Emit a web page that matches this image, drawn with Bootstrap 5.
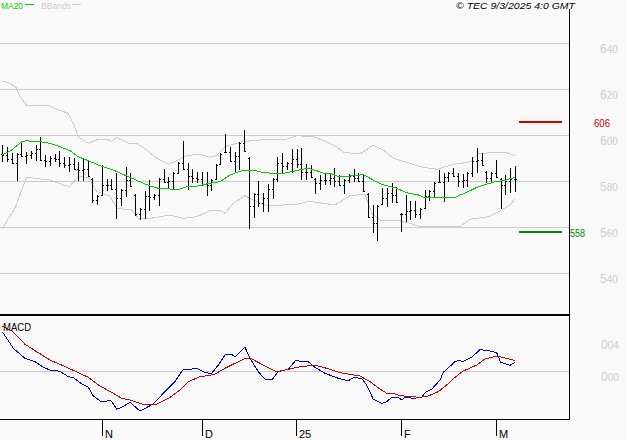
<!DOCTYPE html>
<html lang="en">
<head>
<meta charset="utf-8">
<title>Chart</title>
<link href="https://cdn.jsdelivr.net/npm/bootstrap@5.3.0/dist/css/bootstrap.min.css" rel="stylesheet">
<style>
html,body{background:#f9f9f9;overflow:hidden}
.chart-frame{width:627px;height:440px}
.chart-canvas{width:627px;height:440px;font-family:"Liberation Sans",Arial,sans-serif}
.chart-canvas line,.chart-canvas polyline,.chart-canvas rect,.chart-canvas path{shape-rendering:crispEdges}
.chart-canvas polyline{fill:none;stroke-width:1}
.grid-line{stroke:#ccc;stroke-width:1}
.axis-line{stroke:#000;stroke-width:1}
.band-line{stroke:#ccc}
.ma-line{stroke:#00cc00}
.macd-line{stroke:#0000cc}
.signal-line{stroke:#cc0000}
.bars-path{stroke:#000;stroke-width:1;fill:none}
.txt{font-size:11px}
.txt-top{font-size:9.5px}
.txt-grey{fill:#ccc}
.txt-green{fill:#00cc00}
.txt-dark-green{fill:#008800;font-size:11px}
.txt-red{fill:#cc0000;font-size:11px}
.txt-black{fill:#000}
.txt-it{font-style:italic;font-size:9.5px;fill:#000}
.big-digit{font-size:12px}
.small-digits{font-size:10px}
</style>
</head>
<body class="m-0 p-0">
<div class="chart-frame d-block">
<svg class="chart-canvas d-block" id="chart" viewBox="0 0 627 440" xmlns="http://www.w3.org/2000/svg">
  <g>
    <line class="grid-line" x1="0" x2="569" y1="43.5" y2="43.5"/>
    <line class="grid-line" x1="0" x2="569" y1="89.5" y2="89.5"/>
    <line class="grid-line" x1="0" x2="569" y1="135.5" y2="135.5"/>
    <line class="grid-line" x1="0" x2="569" y1="181.5" y2="181.5"/>
    <line class="grid-line" x1="0" x2="569" y1="227.5" y2="227.5"/>
    <line class="grid-line" x1="0" x2="569" y1="273.5" y2="273.5"/>
    <line class="grid-line" x1="0" x2="569" y1="371.5" y2="371.5"/>
  </g>
  <g id="plots"></g>
  <rect x="519" y="121" width="43" height="2" fill="#cc0000"/>
  <rect x="519" y="231" width="43" height="2" fill="#008800"/>
  <rect x="0" y="314" width="570" height="2" fill="#000"/>
  <line class="axis-line" x1="569.5" x2="569.5" y1="9" y2="420"/>
  <line class="axis-line" x1="0" x2="570" y1="419.5" y2="419.5"/>
  <line class="axis-line" x1="102.5" x2="102.5" y1="419" y2="436"/>
  <line class="axis-line" x1="202.5" x2="202.5" y1="419" y2="436"/>
  <line class="axis-line" x1="296.5" x2="296.5" y1="419" y2="436"/>
  <line class="axis-line" x1="401.5" x2="401.5" y1="419" y2="436"/>
  <line class="axis-line" x1="496.5" x2="496.5" y1="419" y2="436"/>

  <text class="txt-top txt-green" x="1" y="8.7" textLength="22" lengthAdjust="spacingAndGlyphs">MA20</text>
  <rect x="25" y="4" width="9" height="1" fill="#00cc00"/>
  <text class="txt-top txt-grey" x="41" y="8.7" textLength="30" lengthAdjust="spacingAndGlyphs">BBands</text>
  <rect x="72" y="4" width="9" height="1" fill="#ccc"/>
  <text class="txt-it" x="456" y="8.7" textLength="119" lengthAdjust="spacingAndGlyphs">© TEC 9/3/2025 4:0 GMT</text>

  <g class="txt-grey">
    <text x="600" y="53"><tspan class="big-digit">6</tspan><tspan class="small-digits">40</tspan></text>
    <text x="600" y="99"><tspan class="big-digit">6</tspan><tspan class="small-digits">20</tspan></text>
    <text x="600" y="145"><tspan class="big-digit">6</tspan><tspan class="small-digits">00</tspan></text>
    <text x="600" y="191"><tspan class="big-digit">5</tspan><tspan class="small-digits">80</tspan></text>
    <text x="600" y="237"><tspan class="big-digit">5</tspan><tspan class="small-digits">60</tspan></text>
    <text x="600" y="283"><tspan class="big-digit">5</tspan><tspan class="small-digits">40</tspan></text>
    <text x="601" y="349"><tspan class="big-digit">0</tspan><tspan class="small-digits">04</tspan></text>
    <text x="601" y="381"><tspan class="big-digit">0</tspan><tspan class="small-digits">00</tspan></text>
  </g>
  <text class="txt-red" x="594" y="127" textLength="16" lengthAdjust="spacingAndGlyphs">606</text>
  <text class="txt-dark-green" x="570" y="237" textLength="15" lengthAdjust="spacingAndGlyphs">558</text>

  <text class="txt txt-black" x="3" y="331" textLength="28" lengthAdjust="spacingAndGlyphs">MACD</text>
  <text class="txt txt-black" x="105" y="438">N</text>
  <text class="txt txt-black" x="205" y="438">D</text>
  <text class="txt txt-black" x="299" y="438">25</text>
  <text class="txt txt-black" x="404" y="438">F</text>
  <text class="txt txt-black" x="499" y="438">M</text>
</svg>
</div>
<script src="https://cdn.jsdelivr.net/npm/bootstrap@5.3.0/dist/js/bootstrap.bundle.min.js"></script>
<script>
(function(){
  var NS='http://www.w3.org/2000/svg',host=document.getElementById('plots');
  function seg(ox,oy,a){var r=[];for(var i=0;i<a.length;i+=2)r.push([ox+a[i]/3,oy+a[i+1]/3]);return r;}
  function line(cls,segs){
    var pts=[];segs.forEach(function(s){pts=pts.concat(s);});
    var el=document.createElementNS(NS,'polyline');
    el.setAttribute('class',cls);
    el.setAttribute('points',pts.map(function(p){return p[0].toFixed(1)+','+p[1].toFixed(1);}).join(' '));
    host.appendChild(el);
  }
  line('band-line',[
    seg(0,0,[7,243,30,250,48,262,60,290,80,316,145,316,170,328,205,340,220,370,235,410,265,430,295,418,320,418,335,424,350,412,390,432,410,430]),
    seg(0,130,[440,60,470,85,505,103,530,92,560,77,600,72]),
    seg(210,125,[0,97,20,92,45,65,100,50,150,45,230,42,260,32,310,35,350,50,380,65,400,82,450,87,490,60,520,75,550,100,600,115]),
    seg(400,130,[60,110,110,118,160,103,210,95,235,72,290,66,320,68,345,77])
  ]);
  line('band-line',[
    seg(0,130,[5,298,45,235,65,180,80,142,150,150,190,165,208,170,235,140,265,142,290,185,330,198,350,235,395,240,415,265,440,267,510,255,550,265,590,260]),
    seg(210,125,[0,257,30,256,45,265,70,235,105,212,130,225,175,243,220,240,265,237,295,229,330,233,375,240,420,212,465,208,485,265,510,285,560,285,590,292]),
    seg(400,130,[60,290,180,290,210,268,265,260,305,240,330,225,345,207])
  ]);
  var z3=[7,45,95,21,52,97,37,70,103,52,70,152,64,33,80,79,65,103,94,62,88,108,45,92,121,22,92,136,75,110,151,77,107,165,72,95,179,63,110,194,80,115,208,82,127,222,85,120,235,97,152,250,85,152,264,90,140,278,143,220,292,195,225,307,105,198,321,147,182,335,147,180,350,130,268,364,177,228,379,112,200,392,130,172,406,193,258,421,235,270,436,183,268,449,150,243,463,192,210,478,145,228,492,117,160,506,140,178,521,127,178,535,95,133,550,33,120,564,100,180,578,117,160,592,127,160,607,127,167,621,127,197];
  var z4=[4,163,198,18,118,165,32,85,120,46,27,85,61,65,110,75,80,140,89,50,135,103,15,80,118,97,313,132,205,280,146,167,245,160,205,260,175,178,260,189,160,222,203,95,170,218,85,145,232,110,135,247,72,145,261,72,130,275,70,165,290,117,165,304,120,160,317,160,207,331,150,195,346,147,180,360,147,180,374,130,185,388,150,182,403,163,207,417,147,175,432,133,170,446,145,170,461,147,200,474,205,278,489,240,323,503,240,347,518,190,240,532,190,247,546,175,233,560,185,235];
  var z5=[4,250,305,18,195,275,32,213,270,46,213,265,61,235,267,75,180,237,89,180,213,103,157,205,118,120,160,132,130,215,146,125,155,160,113,140,175,128,170,189,133,173,203,125,170,218,80,140,232,55,130,246,68,108,260,123,160,275,125,160,289,90,145,303,145,237,317,135,195,331,115,190,345,108,185];
  var bars=[];
  function add(ox,oy,a){for(var i=0;i<a.length;i+=3)bars.push({x:Math.floor(ox+a[i]/3)+.5,h:Math.round(oy+a[i+1]/3),l:Math.round(oy+a[i+2]/3)});}
  add(0,130,z3);add(210,125,z4);add(400,130,z5);
  function clamp(v,a,b){return Math.max(a+1,Math.min(b-1,v));}
  var d='',prev=null;
  bars.forEach(function(b,i){
    var next=bars[i+1]||b;
    var c=clamp(Math.round((next.h+next.l)/2),b.h,b.l);
    var o=prev===null?clamp(Math.round((b.h+b.l)/2),b.h,b.l):clamp(prev,b.h,b.l);
    d+='M'+b.x+' '+b.h+'V'+b.l+'M'+(b.x-1.5)+' '+(o+.5)+'H'+(b.x-.5)+'M'+(b.x+.5)+' '+(c+.5)+'H'+(b.x+1.5);
    prev=c;
  });
  var p=document.createElementNS(NS,'path');p.setAttribute('class','bars-path');p.setAttribute('d',d);host.appendChild(p);
  line('ma-line',[
    seg(0,130,[7,75,35,60,65,35,80,32,100,35,120,35,150,40,180,50,210,62,235,80,265,92,300,107,340,120,380,138,420,155,450,168,480,176,510,177,540,177,562,170,590,168]),
    seg(210,125,[0,175,30,170,60,150,100,135,130,135,155,142,185,145,215,146,245,140,270,134,295,130,320,137,345,146,365,147,390,156,420,153,460,149,490,165,515,178,560,190,590,203]),
    seg(400,130,[60,196,70,202,100,203,165,202,200,187,235,170,285,155,310,152,345,142])
  ]);
  line('macd-line',[
    seg(0,310,[7,65,40,115,75,145,105,155,130,172,150,180,180,184,205,200,220,203,240,218,265,232,280,258,305,276,332,271,350,297,365,292,390,277,420,303,460,282,490,250,525,215,548,180,570,178,590,175,615,188]),
    seg(200,310,[30,190,35,190,55,165,75,135,95,133,105,140,135,112,150,145,175,185,195,208,215,210,235,185,265,178,288,150,305,155,325,155,345,172,375,190,415,205,445,212,460,203,485,205,500,225,520,268,545,280,560,275,575,262,595,262,605,270]),
    seg(400,310,[15,262,40,265,65,262,75,248,95,238,120,210,130,187,165,155,175,152,190,154,215,142,240,119,265,122,290,128,302,157,330,166,345,157])
  ]);
  line('signal-line',[
    seg(0,310,[7,48,35,62,75,103,110,125,150,150,200,172,265,202,300,228,340,250,365,265,390,270,430,283,470,283,510,262,540,240,565,215,600,200]),
    seg(200,310,[30,196,45,192,75,175,105,160,135,146,155,147,190,165,230,185,265,178,300,170,345,166,380,175,420,188,480,198,510,215,540,237,560,250,580,250]),
    seg(400,310,[0,257,60,262,85,258,115,245,140,225,165,202,190,183,230,165,255,147,290,138,320,145,345,152])
  ]);
})();
</script>
</body>
</html>
